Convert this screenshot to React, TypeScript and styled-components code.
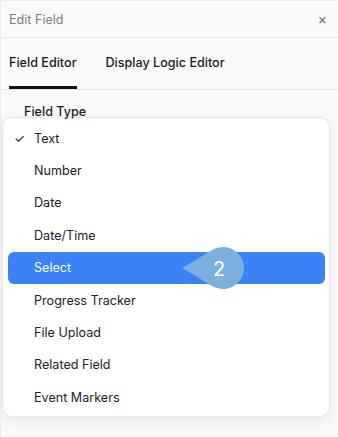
import styled, { createGlobalStyle } from "styled-components";

const fieldTypes = [
  "Text",
  "Number",
  "Date",
  "Date/Time",
  "Select",
  "Progress Tracker",
  "File Upload",
  "Related Field",
  "Event Markers",
];

const selected = "Text";
const highlighted = "Select";

export default function App() {
  return (
    <>
      <GlobalStyle />
      <Panel>
        <Header>
          <Title>Edit Field</Title>
          <Close>×</Close>
        </Header>
        <Tabs>
          <Tab $active>Field Editor</Tab>
          <Tab>Display Logic Editor</Tab>
        </Tabs>
        <Body>
          <Label>Field Type</Label>
          <Menu>
            {fieldTypes.map((name) => (
              <Option key={name} $highlighted={name === highlighted}>
                {name === selected && <Check>✓</Check>}
                {name}
                {name === highlighted && (
                  <Callout width="64" height="42" viewBox="0 0 64 42">
                    <path
                      d="M0 21 L30.25 2.96 A21 21 0 1 1 30.25 39.04 Z"
                      fill="#7aafe0"
                    />
                    <text
                      x="37"
                      y="28.5"
                      textAnchor="middle"
                      fill="#fff"
                      fontSize="20"
                      fontFamily="Inter, sans-serif"
                    >
                      2
                    </text>
                  </Callout>
                )}
              </Option>
            ))}
          </Menu>
        </Body>
      </Panel>
    </>
  );
}

const GlobalStyle = createGlobalStyle`
  html, body {
    margin: 0;
    padding: 0;
    background: #fafafa;
    font-family: Inter, "Noto Sans", sans-serif;
  }
`;

const Panel = styled.div`
  width: 338px;
  height: 437px;
  box-sizing: border-box;
  background: #fafafa;
  border-top: 1px solid #ececec;
  border-left: 1px solid #ececec;
  overflow: hidden;
`;

const Header = styled.div`
  display: flex;
  align-items: center;
  justify-content: space-between;
  height: 36px;
  padding: 0 11px 0 8px;
  border-bottom: 1px solid #e6e6e6;
`;

const Title = styled.div`
  font-size: 12.6px;
  color: #7d7d85;
`;

const Close = styled.div`
  font-size: 14px;
  color: #666;
  line-height: 1;
`;

const Tabs = styled.div`
  display: flex;
  gap: 29px;
  height: 51px;
  padding-left: 8px;
  border-bottom: 1px solid #e6e6e6;
`;

const Tab = styled.div<{ $active?: boolean }>`
  display: flex;
  align-items: center;
  padding-top: 1px;
  font-size: 12.6px;
  font-weight: 500;
  color: #1a1a1a;
  box-sizing: border-box;
  border-bottom: 3px solid ${(p) => (p.$active ? "#111" : "transparent")};
`;

const Body = styled.div`
  padding: 14px 0 0 1px;
`;

const Label = styled.div`
  padding-left: 22px;
  font-size: 12.6px;
  font-weight: 500;
  color: #1f1f1f;
  line-height: 16px;
`;

const Menu = styled.div`
  margin-top: -3px;
  width: 328px;
  box-sizing: border-box;
  padding: 4px 4px 2px 5px;
  background: #fff;
  border: 1px solid #e8e8e8;
  border-radius: 10px;
  box-shadow: 0 4px 14px rgba(0, 0, 0, 0.08);
`;

const Option = styled.div<{ $highlighted?: boolean }>`
  position: relative;
  display: flex;
  align-items: center;
  height: 32.4px;
  padding-left: 26px;
  border-radius: 6px;
  font-size: 12.6px;
  color: ${(p) => (p.$highlighted ? "#fff" : "#222")};
  background: ${(p) => (p.$highlighted ? "#3b82f6" : "transparent")};
`;

const Check = styled.span`
  position: absolute;
  left: 6px;
  font-size: 12.6px;
  color: #222;
`;

const Callout = styled.svg`
  position: absolute;
  left: 174px;
  top: -5px;
`;
